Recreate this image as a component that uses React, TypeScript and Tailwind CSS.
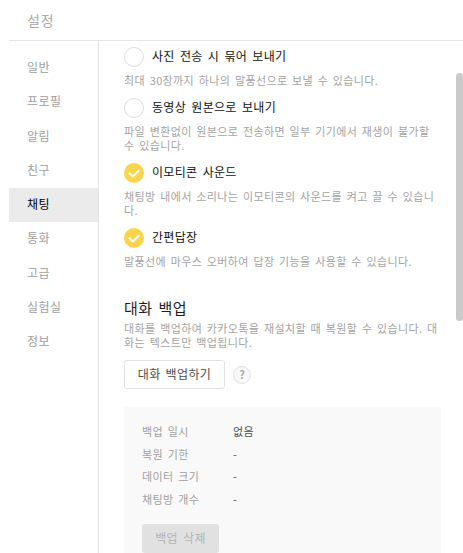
import React from "react";

const menu = [
  "일반",
  "프로필",
  "알림",
  "친구",
  "채팅",
  "통화",
  "고급",
  "실험실",
  "정보",
];

const options = [
  {
    label: "사진 전송 시 묶어 보내기",
    text: "최대 30장까지 하나의 말풍선으로 보낼 수 있습니다.",
    checked: false,
  },
  {
    label: "동영상 원본으로 보내기",
    text: "파일 변환없이 원본으로 전송하면 일부 기기에서 재생이 불가할\n수 있습니다.",
    checked: false,
  },
  {
    label: "이모티콘 사운드",
    text: "채팅방 내에서 소리나는 이모티콘의 사운드를 켜고 끌 수 있습니\n다.",
    checked: true,
  },
  {
    label: "간편답장",
    text: "말풍선에 마우스 오버하여 답장 기능을 사용할 수 있습니다.",
    checked: true,
  },
];

const backupInfo = [
  { name: "백업 일시", value: "없음" },
  { name: "복원 기한", value: "-" },
  { name: "데이터 크기", value: "-" },
  { name: "채팅방 개수", value: "-" },
];

const Check = ({ checked }: { checked: boolean }) => {
  if (!checked) {
    return (
      <span className="size-5 shrink-0 rounded-full border border-[#dedede] bg-white" />
    );
  }
  return (
    <span className="flex size-5 shrink-0 items-center justify-center rounded-full bg-[#fad54b]">
      <svg width="20" height="20" viewBox="0 0 20 20" fill="none">
        <path
          d="M5.6 10.3 9 13.4 14.8 7.8"
          stroke="#fff"
          strokeWidth="2"
          strokeLinecap="round"
          strokeLinejoin="round"
        />
      </svg>
    </span>
  );
};

const Description = ({ text }: { text: string }) => {
  return (
    <p className="whitespace-pre text-[11px] leading-[14px] tracking-[0.38px] text-[#a3a3a3] [word-spacing:1.8px]">
      {text}
    </p>
  );
};

const App = () => {
  return (
    <div className="flex h-[553px] w-[463px] flex-col overflow-hidden bg-white pl-[9px] font-['Noto_Sans_CJK_KR',sans-serif]">
      <header className="flex h-[41px] shrink-0 items-center border-b border-[#e6e6e6] pl-[18px] text-sm tracking-[0.8px] text-[#aaaaaa]">
        설정
      </header>
      <div className="flex min-h-0 flex-1">
        <nav className="w-[90px] shrink-0 border-r border-[#e2e2e2] pt-[10px]">
          {menu.map((item) => (
            <div
              key={item}
              className={
                item === "채팅"
                  ? "flex h-[34.25px] items-center bg-[#ebebeb] pb-[2px] pl-[18px] text-xs tracking-[0.4px] text-black"
                  : "flex h-[34.25px] items-center pb-[2px] pl-[18px] text-xs tracking-[0.4px] text-[#a0a0a0]"
              }
            >
              {item}
            </div>
          ))}
        </nav>
        <main className="min-w-0 flex-1 pl-[25px] pt-[6px]">
          {options.map((option) => (
            <div key={option.label} className="mb-[11px]">
              <div className="mb-[6px] flex h-5 items-center gap-2">
                <Check checked={option.checked} />
                <span className="whitespace-nowrap pb-[2px] text-xs tracking-[0.32px] text-[#111111] [word-spacing:2.2px]">
                  {option.label}
                </span>
              </div>
              <Description text={option.text} />
            </div>
          ))}
          <h2 className="mb-[3px] mt-[30px] text-[15px] leading-5 tracking-[0.4px] text-[#1e1e1e] [word-spacing:2.4px]">
            대화 백업
          </h2>
          <Description
            text={
              "대화를 백업하여 카카오톡을 재설치할 때 복원할 수 있습니다. 대\n화는 텍스트만 백업됩니다."
            }
          />
          <div className="mt-[11px] flex items-center gap-2">
            <button className="h-[29px] w-[101px] rounded-[3px] border border-[#e2e2e2] pb-[2px] text-xs tracking-[0.36px] text-[#4c4c4c] [word-spacing:2px]">
              대화 백업하기
            </button>
            <span className="flex size-[18px] items-center justify-center rounded-full border border-[#e2e2e2] bg-[#f9f9f9] text-[11px] font-bold text-[#aaaaaa]">
              ?
            </span>
          </div>
          <section className="mt-[18px] h-[180px] w-[317px] bg-[#f9f9f9] pl-[18px] pt-[13px]">
            {backupInfo.map((row) => (
              <div
                key={row.name}
                className="flex h-[22.5px] items-center text-[11px] tracking-[0.38px] [word-spacing:1.8px]"
              >
                <span className="w-[91px] text-[#a0a0a0]">{row.name}</span>
                <span className="text-[#4c4c4c]">{row.value}</span>
              </div>
            ))}
            <button className="mt-[14px] h-[29px] w-[77px] rounded-[3px] bg-[#e1e1e1] pb-[2px] text-xs tracking-[0.36px] text-[#b4b4b4] [word-spacing:2px]">
              백업 삭제
            </button>
          </section>
        </main>
        <div className="mt-8 h-[248px] w-[7px] shrink-0 rounded-full bg-[#cacaca]" />
      </div>
    </div>
  );
};

export default App;
